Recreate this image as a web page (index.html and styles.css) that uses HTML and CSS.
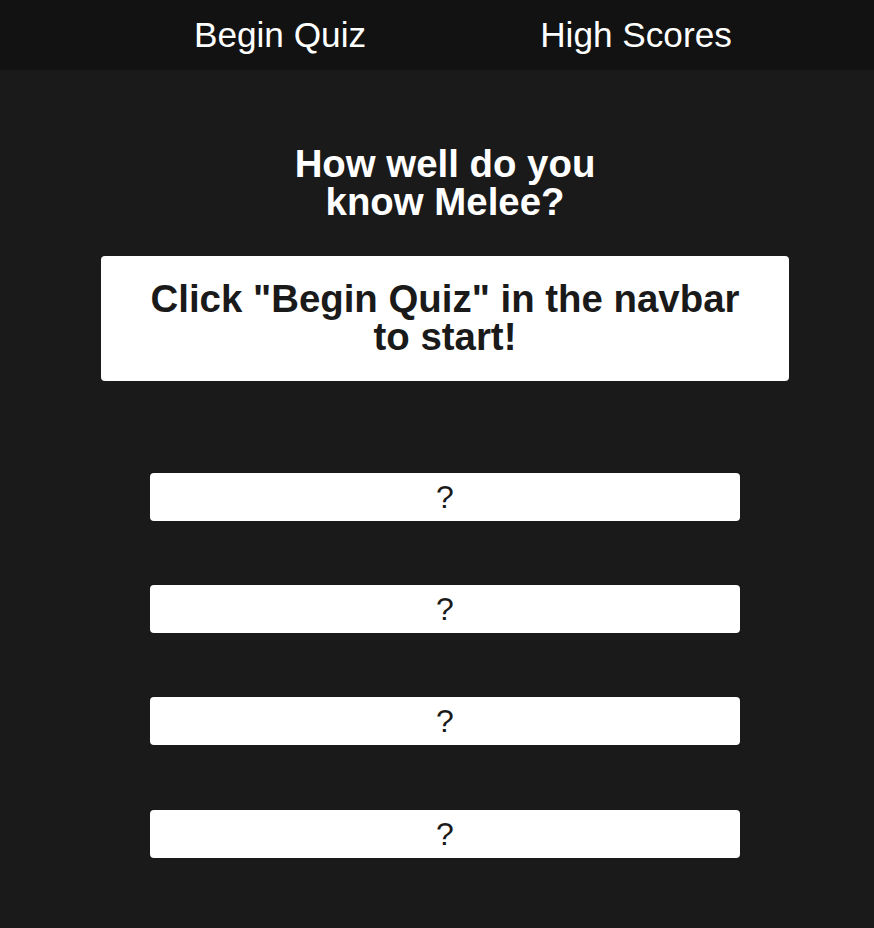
FILE: index.html
```html
<!DOCTYPE html>
<html lang="en">
<head>
<meta charset="utf-8">
<title>Melee Quiz</title>
<link rel="stylesheet" href="styles.css">
</head>
<body>
<nav class="navbar">
  <ul class="nav-list">
    <li class="nav-item"><a class="nav-link" href="#">Begin Quiz</a></li>
    <li class="nav-item"><a class="nav-link" href="#">High Scores</a></li>
  </ul>
</nav>
<main class="main">
  <h1 class="title">How well do you know Melee?</h1>
  <div class="card">
    <h2 class="card-text">Click "Begin Quiz" in the navbar to start!</h2>
  </div>
  <div class="answers">
    <button class="answer">?</button>
    <button class="answer">?</button>
    <button class="answer">?</button>
    <button class="answer">?</button>
  </div>
</main>
</body>
</html>
```
FILE: styles.css
```css
html, body {
  margin: 0;
  padding: 0;
  background: #1a1a1a;
  font-family: "Liberation Sans", Arial, sans-serif;
  color: #ffffff;
}

.navbar {
  background: #121212;
  height: 70px;
}

.nav-list {
  list-style: none;
  margin: 0;
  padding: 0 0 0 102px;
  display: grid;
  grid-template-columns: 356px 356px;
}

.nav-item {
  text-align: center;
}

.nav-link {
  display: block;
  color: #ffffff;
  text-decoration: none;
  font-size: 35.2px;
  line-height: 70px;
}

.main {
  padding-left: 16px;
  display: flex;
  flex-direction: column;
  align-items: center;
}

.title {
  margin: 75px 0 0;
  width: 360px;
  text-align: center;
  font-size: 38.4px;
  line-height: 1;
  font-weight: bold;
}

.card {
  margin-top: 34px;
  width: 688px;
  box-sizing: border-box;
  padding: 24px 40px;
  background: #ffffff;
  border-radius: 4px;
}

.card-text {
  margin: 0;
  color: #1a1a1a;
  text-align: center;
  font-size: 38.4px;
  line-height: 1;
  font-weight: bold;
}

.answers {
  margin-top: 92px;
  display: flex;
  flex-direction: column;
  gap: 64.4px;
}

.answer {
  width: 590px;
  height: 48px;
  padding: 0;
  border: none;
  border-radius: 4px;
  background: #ffffff;
  color: #1a1a1a;
  font-family: "Liberation Sans", Arial, sans-serif;
  font-size: 32px;
  line-height: 48px;
}
```
